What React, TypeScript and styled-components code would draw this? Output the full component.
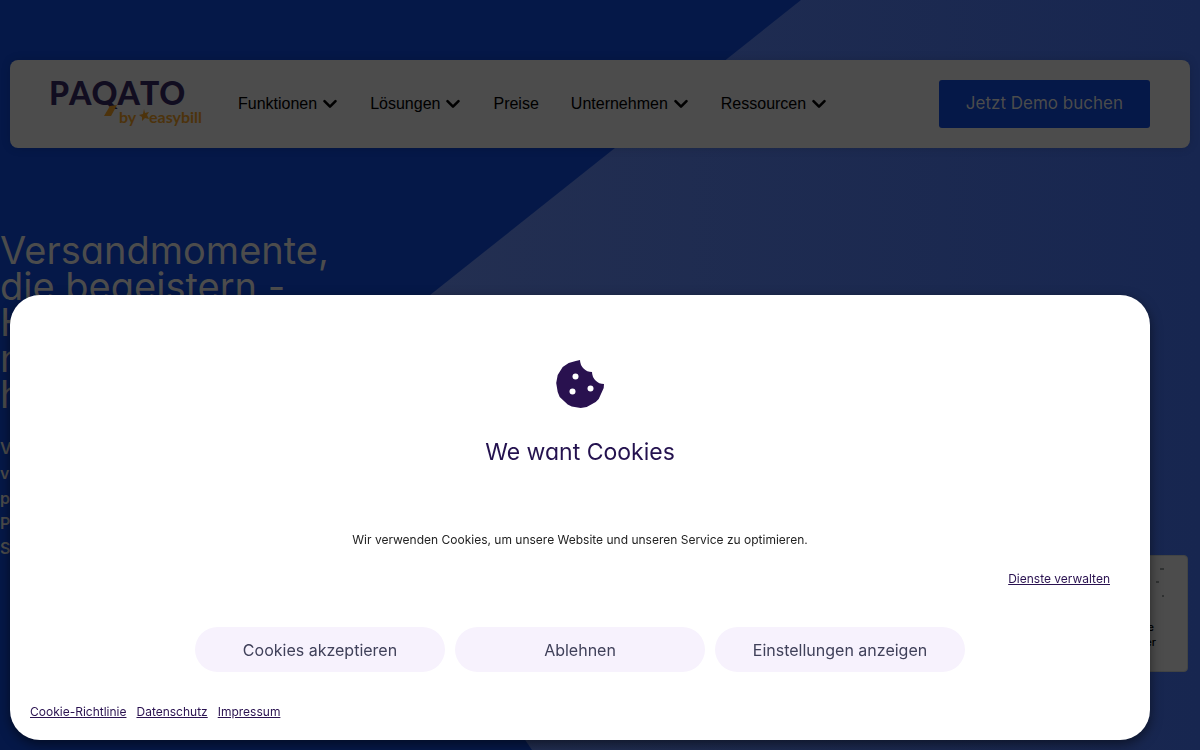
import React from "react";
import styled, { createGlobalStyle } from "styled-components";

const Global = createGlobalStyle`
  * { box-sizing: border-box; }
  html, body, #root { height: 100%; }
  body { margin: 0; overflow: hidden; background: #051848; font-family: Inter, "Liberation Sans", sans-serif; }
  h1, h2, p, ul { margin: 0; padding: 0; }
  a { color: inherit; }
`;

const Page = styled.div`
  position: relative;
  min-height: 100%;
  overflow: hidden;
  background: #051848;
`;
const Backdrop = styled.svg`
  position: absolute;
  inset: 0;
  width: 100%;
  height: 100%;
`;
const Content = styled.div`
  position: relative;
  padding-top: 60px;
`;
const Header = styled.header`
  display: flex;
  align-items: center;
  height: 88px;
  margin: 0 10px;
  padding: 0 40px;
  border-radius: 8px;
  background: #4c4c4c;
  box-shadow: 0 0 10px rgba(0, 0, 0, 0.15);
`;
const Logo = styled.a`
  display: flex;
  width: 156px;
  margin-right: 32px;

  svg { overflow: visible; }
`;
const LogoName = styled.text`
  fill: #110d20;
  font-family: Lato, sans-serif;
  font-size: 32px;
  font-weight: 900;
  font-kerning: none;
`;
const LogoByline = styled.text`
  fill: #4d330c;
  font-family: Lato, sans-serif;
  font-size: 16px;
  font-weight: 700;
`;
const Menu = styled.ul`
  display: flex;
  flex: 1;
  gap: 32px;
  list-style: none;
`;
const MenuLink = styled.a`
  display: flex;
  align-items: center;
  gap: 5px;
  color: #000;
  font: 16px/24px "Liberation Sans", Arial, sans-serif;
  text-decoration: none;
`;
const DemoButton = styled.button`
  height: 48px;
  padding: 0 27px 3px;
  border: 0;
  border-radius: 3px;
  background: #051848;
  color: #4c4c4c;
  font: 17px/24px Inter, sans-serif;
  font-feature-settings: "cv11";
`;
const Hero = styled.main`
  padding-top: 84px;
`;
const Title = styled.h1`
  color: #4c4c4c;
  font: 400 38px/36px Inter, sans-serif;
  font-feature-settings: "cv11";
`;
const Intro = styled.p`
  margin-top: 24px;
  color: #4c4c4c;
  font: 600 16px/25px Inter, sans-serif;
`;
const Card = styled.aside`
  position: absolute;
  top: 555px;
  right: 12px;
  display: flex;
  flex-direction: column;
  align-items: flex-end;
  width: 240px;
  height: 117px;
  padding: 64px 31px 0 0;
  border: 1px solid #424444;
  border-radius: 4px;
  background: #4c4c4c;
  color: #000;
`;
const CardText = styled.p`
  text-align: center;
  font: 500 11px/15px Inter, sans-serif;
`;
const Specks = styled.svg`
  position: absolute;
  top: 4px;
  right: 11px;
`;
const Banner = styled.section`
  position: fixed;
  left: 10px;
  right: 50px;
  bottom: 10px;
  display: flex;
  flex-direction: column;
  align-items: center;
  padding: 65px 20px 18px;
  border-radius: 30px;
  background: #fff;
  color: #222;
  box-shadow: 0 4px 12px rgba(0, 0, 0, 0.5);
`;
const BannerTitle = styled.h2`
  margin-top: 28px;
  color: #24124f;
  font: 400 23px/32px Inter, sans-serif;
  font-feature-settings: "cv11";
`;
const Message = styled.p`
  margin-top: 62px;
  font-size: 12px;
  line-height: 20px;
`;
const TextLink = styled.a`
  color: #2a1250;
  font-size: 12px;
  line-height: 20px;
`;
const Manage = styled.div`
  align-self: flex-end;
  margin: 17px 20px 38px 0;
  line-height: 20px;
`;
const Actions = styled.div`
  display: flex;
  gap: 10px;
`;
const Action = styled.button`
  width: 250px;
  height: 45px;
  border: 0;
  border-radius: 23px;
  background: #f7f2fd;
  color: #40415a;
  font: 16px/24px Inter, sans-serif;
`;
const Legal = styled.nav`
  display: flex;
  align-self: flex-start;
  gap: 10px;
  margin-top: 30px;
`;

const menu = [
  { label: "Funktionen", sub: true },
  { label: "Lösungen", sub: true },
  { label: "Preise", sub: false },
  { label: "Unternehmen", sub: true },
  { label: "Ressourcen", sub: true },
];

const Chevron = () => (
  <svg width="16" height="16" viewBox="0 0 16 16" fill="none" stroke="#000" strokeWidth="2.6" strokeLinecap="round" strokeLinejoin="round" aria-hidden="true">
    <path d="M2.5 5.2 8 10.7l5.5-5.5" />
  </svg>
);

const Wordmark = () => (
  <svg width="156" height="48" viewBox="0 0 156 48" role="img" aria-label="PAQATO by easybill">
    <LogoName x="-1" y="25">PAQATO</LogoName>
    <path d="m60 26 7-1-6 11h-7z" fill="#4d330c" />
    <LogoByline x="69" y="43">by</LogoByline>
    <path d="m94 29 1 4 4-1-2 3 2 4-4-1-3 3v-4l-3-2 4-1z" fill="#4d330c" />
    <LogoByline x="99" y="43">easybill</LogoByline>
  </svg>
);

const Cookie = () => (
  <svg width="48" height="48" viewBox="0 0 48 48" aria-hidden="true">
    <path fill="#29114f" d="M24 0a12.100 12.100 0 0 0 12 12 12.100 12.100 0 0 0 12 12l-.3 4-5 11-3 3-9 5-6 .9-9-1.400-4-2-8-7.500-2-5-1.500-9 1.500-8 5-8 6-4 7-2z" />
    <g fill="#fff"><circle cx="19.500" cy="16.500" r="3" /><circle cx="34.500" cy="28.500" r="3" /><circle cx="16.500" cy="31.500" r="3" /></g>
  </svg>
);

export default function App() {
  return (
    <Page>
      <Global />
      <Backdrop viewBox="0 0 1200 750" preserveAspectRatio="none" aria-hidden="true">
        <defs>
          <linearGradient id="sheen" gradientUnits="userSpaceOnUse" x1="430" y1="0" x2="1200" y2="0">
            <stop offset="0" stopColor="#232f51" />
            <stop offset="1" stopColor="#172650" />
          </linearGradient>
        </defs>
        <path d="M801 0 376 338v158q0 20 10 40l146 214h668V0z" fill="url(#sheen)" />
      </Backdrop>
      <Content>
        <Header>
          <Logo href="#"><Wordmark /></Logo>
          <Menu>
            {menu.map((m) => (
              <li key={m.label}>
                <MenuLink href="#">{m.label}{m.sub && <Chevron />}</MenuLink>
              </li>
            ))}
          </Menu>
          <DemoButton>Jetzt Demo buchen</DemoButton>
        </Header>
        <Hero>
          <Title>Versandmomente,<br />die begeistern -<br />H<br />n<br />h</Title>
          <Intro>V<br />v<br />p<br />P<br />S</Intro>
        </Hero>
      </Content>
      <Card>
        <Specks width="24" height="44" viewBox="0 0 24 44" fill="#303232" aria-hidden="true">
          <path d="M8 8h4v2H8zM4 21h3v2H4zM10 35h2v2h-2z" />
        </Specks>
        <CardText>e<br />er</CardText>
      </Card>
      <Banner role="dialog" aria-labelledby="cookie-title">
        <Cookie />
        <BannerTitle id="cookie-title">We want Cookies</BannerTitle>
        <Message>Wir verwenden Cookies, um unsere Website und unseren Service zu optimieren.</Message>
        <Manage><TextLink href="#">Dienste verwalten</TextLink></Manage>
        <Actions>
          <Action>Cookies akzeptieren</Action>
          <Action>Ablehnen</Action>
          <Action>Einstellungen anzeigen</Action>
        </Actions>
        <Legal>
          <TextLink href="#">Cookie-Richtlinie</TextLink>
          <TextLink href="#">Datenschutz</TextLink>
          <TextLink href="#">Impressum</TextLink>
        </Legal>
      </Banner>
    </Page>
  );
}
